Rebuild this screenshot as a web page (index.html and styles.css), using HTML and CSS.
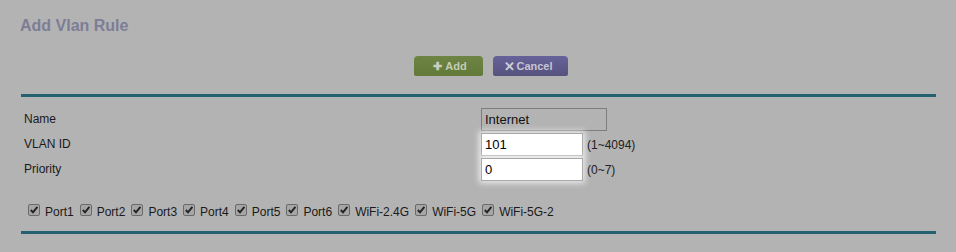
FILE: index.html
```html
<!DOCTYPE html>
<html>
<head>
<meta charset="utf-8">
<link rel="stylesheet" href="styles.css">
</head>
<body>
<div class="page">
  <h1 class="title">Add Vlan Rule</h1>
  <div class="actions">
    <button class="btn btn-add"><span class="plus">✚</span> Add</button>
    <button class="btn btn-cancel"><span class="x">✕</span>Cancel</button>
  </div>
  <div class="rule"></div>
  <div class="form">
    <div class="row">
      <div class="label">Name</div>
      <div class="field"><div class="input input-ro">Internet</div></div>
    </div>
    <div class="row">
      <div class="label">VLAN ID</div>
      <div class="field"><div class="input input-hl">101</div><span class="hint">(1~4094)</span></div>
    </div>
    <div class="row">
      <div class="label">Priority</div>
      <div class="field"><div class="input input-hl">0</div><span class="hint">(0~7)</span></div>
    </div>
  </div>
  <div class="ports">
    <label class="port"><span class="cb"></span>Port1</label>
    <label class="port"><span class="cb"></span>Port2</label>
    <label class="port"><span class="cb"></span>Port3</label>
    <label class="port"><span class="cb"></span>Port4</label>
    <label class="port"><span class="cb"></span>Port5</label>
    <label class="port"><span class="cb"></span>Port6</label>
    <label class="port"><span class="cb"></span>WiFi-2.4G</label>
    <label class="port"><span class="cb"></span>WiFi-5G</label>
    <label class="port"><span class="cb"></span>WiFi-5G-2</label>
  </div>
  <div class="rule"></div>
</div>
</body>
</html>
```
FILE: styles.css
```css
html, body {
  margin: 0;
  background: #b3b3b3;
}
body {
  font-family: "Liberation Sans", Arial, sans-serif;
  font-size: 12px;
  color: #1a1a1a;
}
.page {
  width: 915px;
  padding: 16px 0 0 21px;
}
.title {
  margin: 0 0 0 -1px;
  font-size: 16px;
  line-height: 19px;
  font-weight: bold;
  color: #7d7d96;
}
.actions {
  display: flex;
  gap: 10px;
  margin-top: 21px;
  padding-left: 393px;
}
.btn {
  height: 20px;
  border: none;
  border-radius: 4px 4px 2px 2px;
  font-family: "Liberation Sans", Arial, sans-serif;
  font-size: 11px;
  font-weight: bold;
  padding: 0;
  display: flex;
  align-items: center;
  justify-content: center;
}
.btn-add {
  width: 69px;
  background: linear-gradient(#6e8444, #62793a);
  color: #c4ccb4;
  padding-left: 3px;
}
.btn-add .plus {
  font-size: 11px;
  color: #c9cfbd;
  margin-right: 3px;
}
.btn-cancel {
  width: 75px;
  background: linear-gradient(#67639a, #56527e);
  color: #c6c5d4;
  padding-right: 4px;
}
.btn-cancel .x {
  font-size: 13px;
  font-weight: bold;
  color: #cfcfd8;
  margin-right: 1px;
}
.rule {
  height: 3px;
  background: #236170;
}
.actions + .rule {
  margin-top: 18px;
}
.form {
  margin-top: 10px;
}
.row {
  display: flex;
  align-items: center;
  height: 25px;
}
.label {
  width: 457px;
  padding-left: 3px;
  padding-bottom: 2px;
}
.field {
  display: flex;
  align-items: center;
}
.input {
  box-sizing: border-box;
  height: 23px;
  line-height: 21px;
  font-size: 13px;
  padding-left: 3px;
  color: #000;
}
.input-ro {
  width: 126px;
  border: 1px solid #7d7d7d;
  color: #111;
}
.input-hl {
  width: 102px;
  background: #fff;
  border: 1px solid #a9a9a9;
  box-shadow: 0 0 6px 2px rgba(255, 255, 255, 0.75);
}
.hint {
  margin-left: 4px;
  color: #222;
  font-size: 12px;
}
.ports {
  display: flex;
  align-items: center;
  height: 24px;
  margin-top: 18px;
  margin-bottom: 7px;
  padding-left: 7px;
}
.port {
  display: flex;
  align-items: center;
  margin-right: 6px;
  font-size: 12px;
  color: #1a1a1a;
}
.cb {
  box-sizing: border-box;
  width: 12px;
  height: 12px;
  margin-right: 5px;
  border: 1px solid #6a6a6a;
  border-radius: 2px;
  background: #a6a6a6 url("data:image/svg+xml;utf8,<svg xmlns='http://www.w3.org/2000/svg' viewBox='0 0 10 10'><path d='M1.8 5 L4 7.3 L8.4 1.8' fill='none' stroke='%23222' stroke-width='1.9'/></svg>") center/10px 10px no-repeat;
  position: relative;
  top: -2px;
}
```
